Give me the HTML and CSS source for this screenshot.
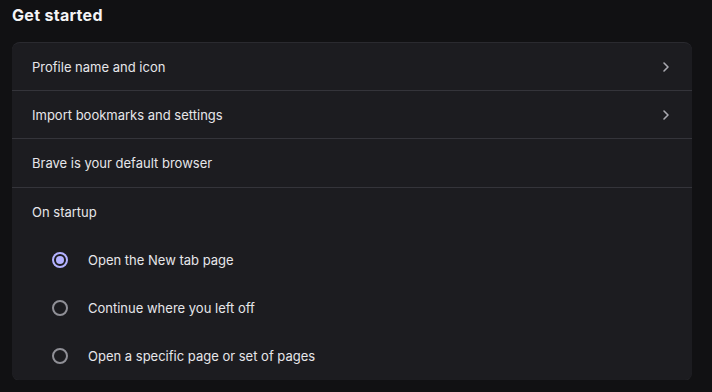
FILE: index.html
```html
<!DOCTYPE html>
<html>
<head>
<meta charset="utf-8">
<link rel="stylesheet" href="styles.css">
</head>
<body>
<main class="page">
  <h1 class="title">Get started</h1>
  <section class="card">
    <div class="row link">
      <span>Profile name and icon</span>
      <svg class="chev" width="16" height="16" viewBox="0 0 16 16"><path d="M6 4l4 4-4 4" fill="none" stroke="currentColor" stroke-width="1.6" stroke-linecap="round" stroke-linejoin="round"/></svg>
    </div>
    <div class="row link">
      <span>Import bookmarks and settings</span>
      <svg class="chev" width="16" height="16" viewBox="0 0 16 16"><path d="M6 4l4 4-4 4" fill="none" stroke="currentColor" stroke-width="1.6" stroke-linecap="round" stroke-linejoin="round"/></svg>
    </div>
    <div class="row tall">
      <span>Brave is your default browser</span>
    </div>
    <div class="startup">
      <div class="heading">On startup</div>
      <div class="option"><span class="radio checked"></span><span>Open the New tab page</span></div>
      <div class="option"><span class="radio"></span><span>Continue where you left off</span></div>
      <div class="option"><span class="radio"></span><span>Open a specific page or set of pages</span></div>
    </div>
  </section>
</main>
</body>
</html>
```
FILE: styles.css
```css
html, body {
  margin: 0;
  padding: 0;
  background: #111113;
}
body {
  font-family: Inter, "Noto Sans", sans-serif;
  color: #e6e6ea;
  -webkit-font-smoothing: antialiased;
}
.page {
  padding: 4px 20px 0 12px;
}
.title {
  margin: 0;
  height: 38px;
  font-size: 16px;
  font-weight: 700;
  line-height: 22px;
  color: #f4f4f6;
  letter-spacing: 0.3px;
}
.card {
  background: #1c1c20;
  border-radius: 8px;
  border-top: 1px solid #2a2a2f;
  box-shadow: 0 1px 0 #232327;
  overflow: hidden;
}
.row {
  height: 47px;
  border-bottom: 1px solid #34343a;
  display: flex;
  align-items: center;
  justify-content: space-between;
  padding: 0 20px;
  font-size: 13px;
}
.row.tall {
  height: 48px;
}
.chev {
  color: #a9a9b0;
  margin-right: -2px;
}
.startup {
  font-size: 13px;
}
.heading {
  height: 48px;
  display: flex;
  align-items: center;
  padding: 0 20px;
}
.option {
  height: 48px;
  display: flex;
  align-items: center;
  padding-left: 40px;
  gap: 20px;
}
.radio {
  box-sizing: border-box;
  width: 16px;
  height: 16px;
  border-radius: 50%;
  border: 2px solid #8f8f96;
  flex: none;
  position: relative;
}
.radio.checked {
  border-color: #b3b1ff;
}
.radio.checked::after {
  content: "";
  position: absolute;
  left: 2px;
  top: 2px;
  width: 8px;
  height: 8px;
  border-radius: 50%;
  background: #b3b1ff;
}
```
